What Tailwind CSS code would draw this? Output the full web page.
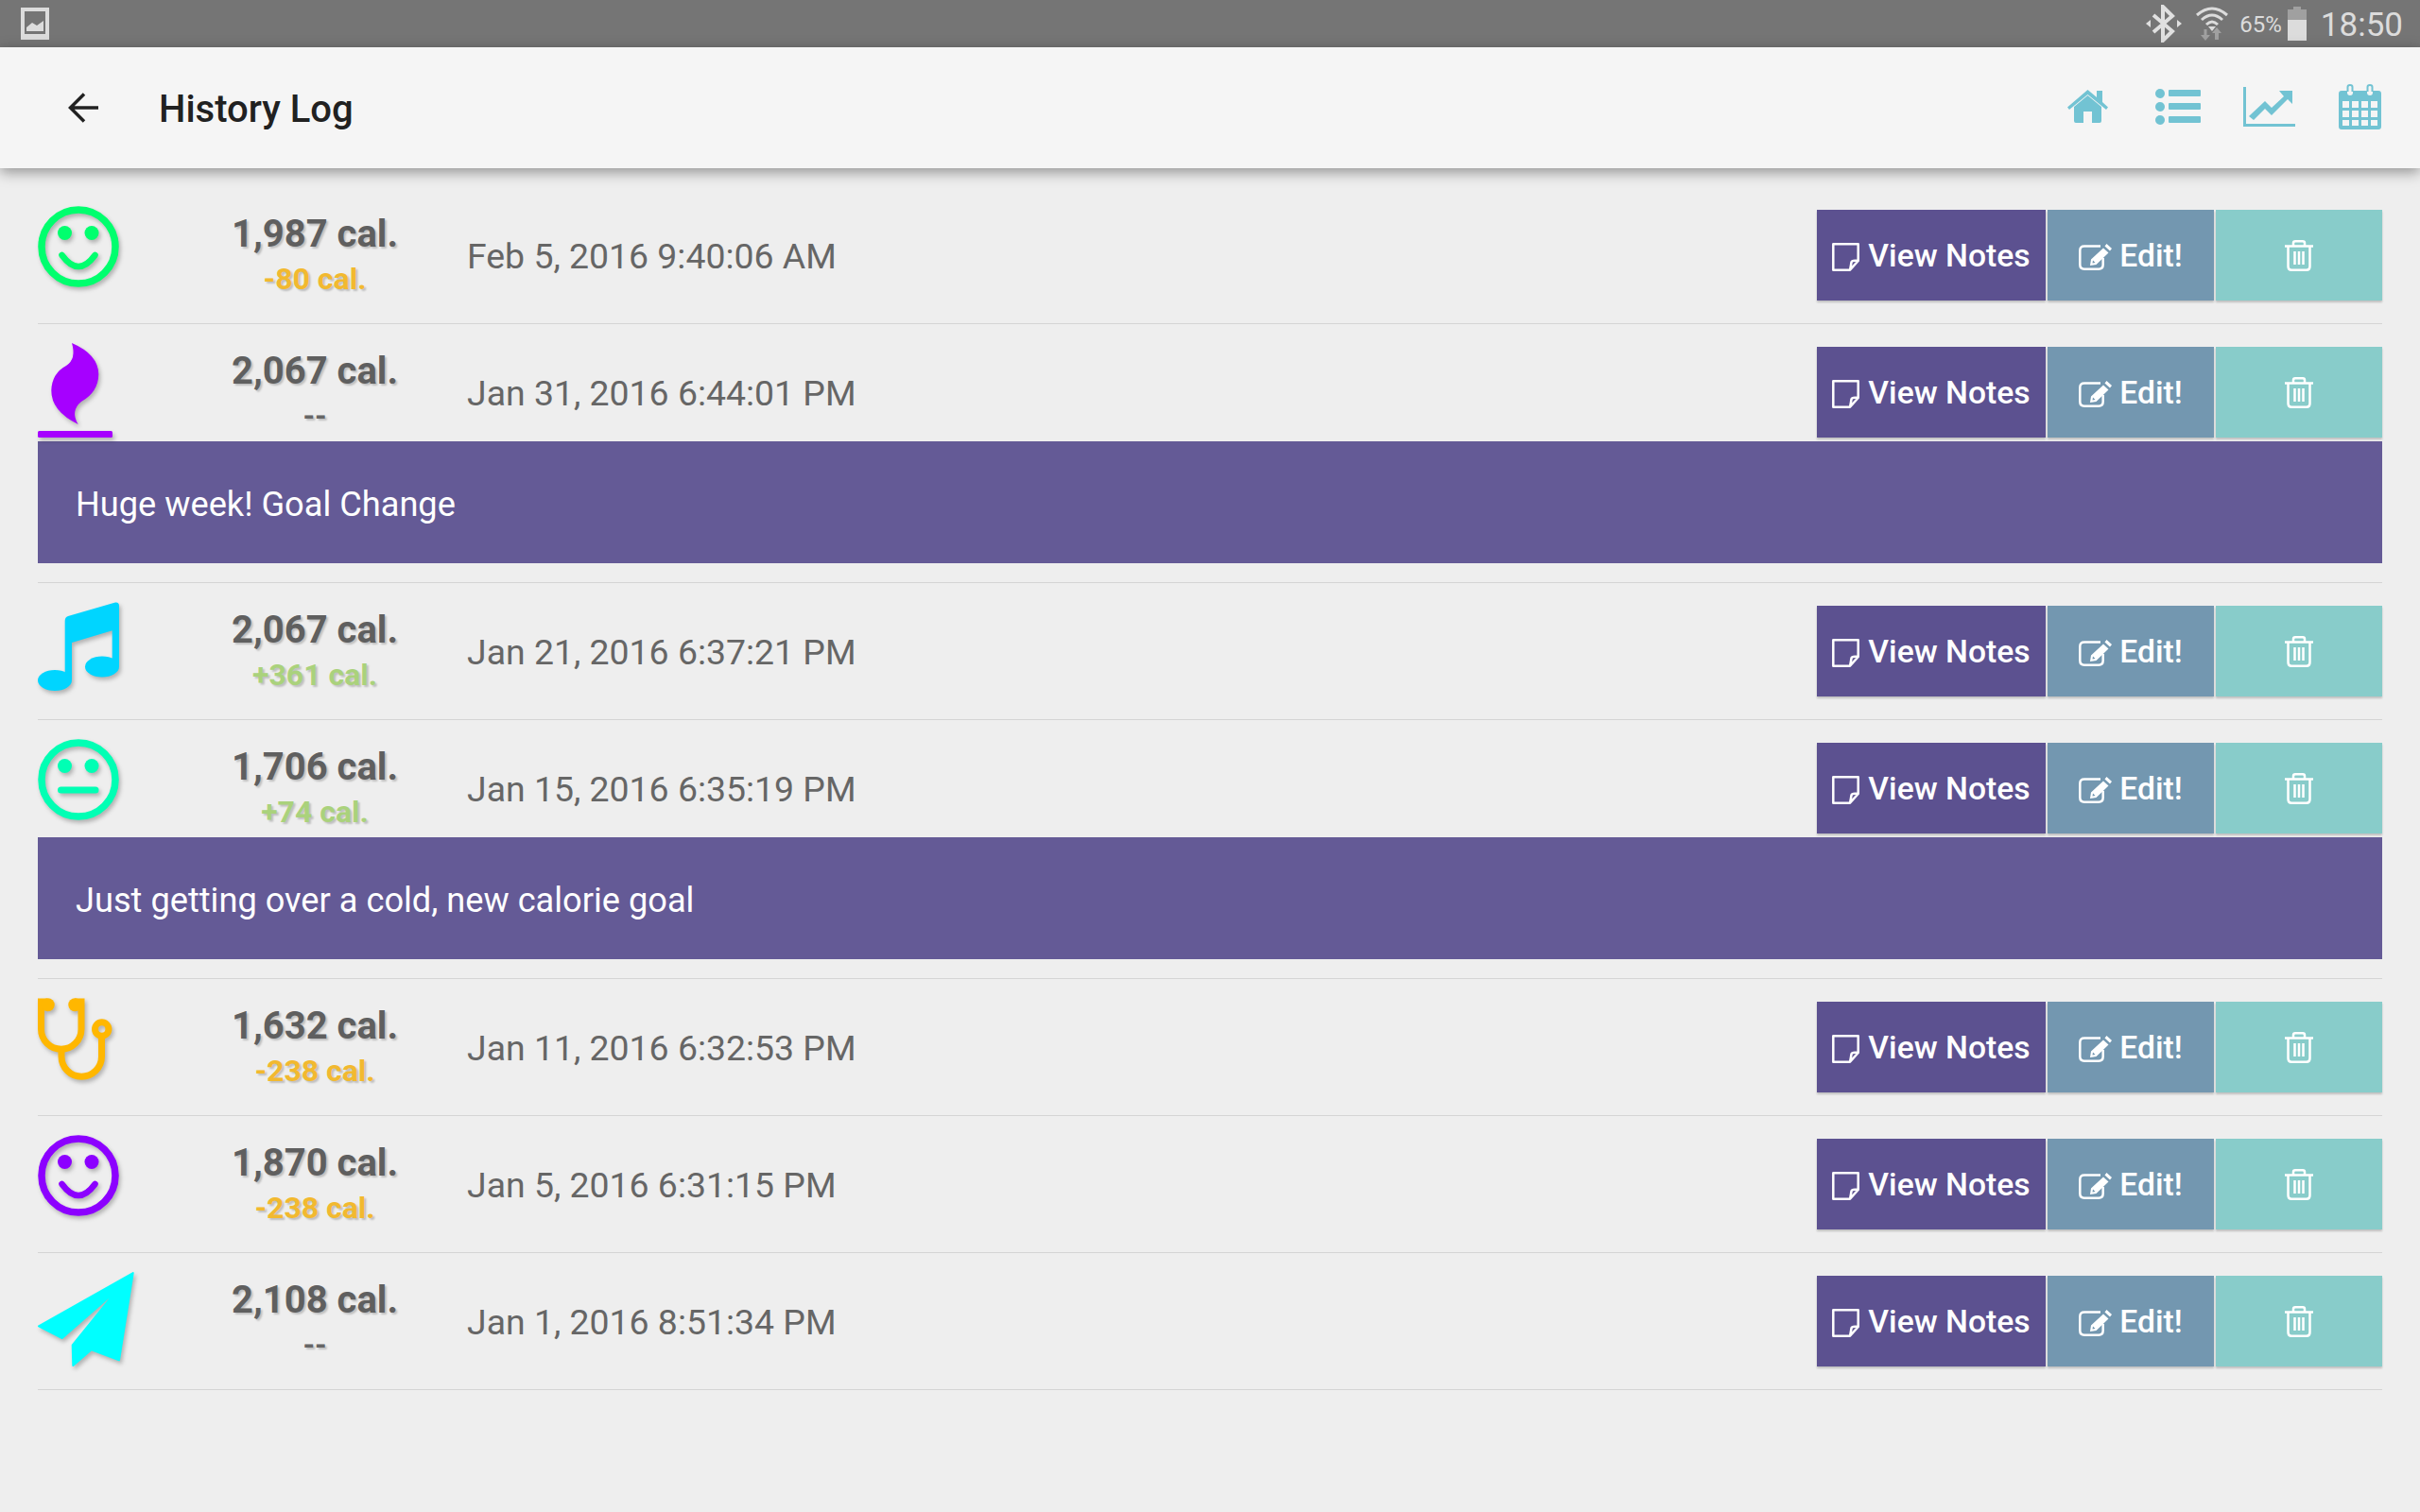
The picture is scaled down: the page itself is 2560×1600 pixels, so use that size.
<!doctype html>
<html>
<head>
<meta charset="utf-8">
<title>History Log</title>
<script src="https://cdn.jsdelivr.net/npm/@tailwindcss/browser@4"></script>
</head>
<body class="bg-[#eeeeee] font-['Roboto',sans-serif] w-[2560px] h-[1600px] overflow-hidden">

<!-- status bar -->
<div class="h-[50px] bg-[#757575] flex items-center pl-[22px] pr-[18px] text-[#dcdcdc]">
    <svg class="w-[30px] h-[34px]" viewBox="0 0 30 34"><path fill="#dcdcdc" fill-rule="evenodd" d="M0 0H30V34H0ZM4 4V28H26V4Z"/><path fill="#dcdcdc" d="M6 25V21L12 16L17 19L24 14V25Z"/></svg>
    <svg class="w-[38px] h-[40px] ml-auto" viewBox="0 0 38 40"><path fill="none" stroke="#e0e0e0" stroke-width="4" d="M8 11L28 28L18 38V2L28 12L8 29"/><path fill="#e0e0e0" d="M0 20L5 16V24ZM38 20L33 16V24Z"/></svg>
    <svg class="w-[36px] h-[38px] ml-[14px]" viewBox="0 0 36 38"><path fill="none" stroke="#dcdcdc" stroke-width="3" d="M2 10Q18 -4 34 10M7 15Q18 5 29 15M12 20Q18 14 24 20"/><path fill="#dcdcdc" d="M18 27L14 22H22Z"/><path fill="#a0a0a0" d="M11 37L6 31H9.500V25H12.500V31H16ZM23 23L28 29H25V36H21V29H18Z"/></svg>
    <span class="text-[24px] leading-none ml-[11px] mt-[2px]">65%</span>
    <div class="w-[20px] h-[36px] ml-[6px] flex flex-col items-center">
        <div class="w-[8px] h-[3px] bg-[#a0a0a0]"></div>
        <div class="w-full h-[11px] bg-[#a0a0a0]"></div>
        <div class="w-full h-[22px] bg-[#dcdcdc]"></div>
    </div>
    <span class="text-[35px] leading-none ml-[15px] mt-[2px]">18:50</span>
</div>

<!-- app bar -->
<div class="relative h-[128px] bg-[#f5f5f5] flex items-center shadow-[0_4px_14px_rgba(0,0,0,0.4)]">
    <svg class="w-[32px] h-[32px] ml-[72px]" viewBox="0 0 32 32"><path fill="none" stroke="#212121" stroke-width="3.500" d="M32 16H3M17 1.500L2.500 16L17 30.500"/></svg>
    <h1 class="ml-[64px] mt-[4px] text-[40px] font-medium text-[#212121]">History Log</h1>
    <div class="ml-auto flex items-center mr-[41px] -mt-[3px]">
        <svg class="w-[43px] h-[35px]" viewBox="0 0 43 35"><path fill="#72c3d3" d="M21.500 6L36 18V33Q36 35 34 35H26V23H17V35H9Q7 35 7 33V18Z"/><path fill="#72c3d3" d="M21.500 0L31 8V1H37V13L43 18.500L41 21L21.500 5L2 21L0 18.500Z"/></svg>
        <svg class="w-[48px] h-[38px] ml-[50px]" viewBox="0 0 48 38"><g fill="#72c3d3"><circle cx="5" cy="5" r="5"/><circle cx="5" cy="19" r="5"/><circle cx="5" cy="33" r="5"/><rect x="14" y="1" width="34" height="7" rx="1"/><rect x="14" y="15" width="34" height="7" rx="1"/><rect x="14" y="29" width="34" height="7" rx="1"/></g></svg>
        <svg class="w-[55px] h-[42px] ml-[45px]" viewBox="0 0 55 42"><path fill="#72c3d3" d="M0 0H3V39H55V42H0Z"/><path fill="#72c3d3" d="M6 31L23 15L30 22L43 10L38 4H52V18L47 13L30 30L23 23L11 35Z"/></svg>
        <svg class="w-[45px] h-[48px] ml-[46px]" viewBox="0 0 45 48"><path fill="#72c3d3" fill-rule="evenodd" d="M3 7H9V9Q9 12 12 12Q15 12 15 9V7H30V9Q30 12 33 12Q36 12 36 9V7H42Q45 7 45 10V45Q45 48 42 48H3Q0 48 0 45V10Q0 7 3 7ZM4 18V25H11V18ZM14 18V25H21V18ZM24 18V25H31V18ZM34 18V25H41V18ZM4 28V35H11V28ZM14 28V35H21V28ZM24 28V35H31V28ZM34 28V35H41V28ZM4 38V44H11V38ZM14 38V44H21V38ZM24 38V44H31V38ZM34 38V44H41V38Z"/><path fill="none" stroke="#72c3d3" stroke-width="2" d="M9.500 8V3Q9.500 1 12 1Q14.500 1 14.500 3V8M30.500 8V3Q30.500 1 33 1Q35.500 1 35.500 3V8"/></svg>
    </div>
</div>

<!-- history list -->
<div class="pt-[20px] mx-[40px]">

    <!-- Feb 5 -->
    <div class="border-b border-[#d4d4d4] pb-[20px]">
        <div class="flex h-[124px] items-start">
            <div class="w-[180px] pt-[20px]">
                <svg class="w-[86px] h-[86px] drop-shadow-[2px_3px_2px_rgba(0,0,0,0.25)]" viewBox="0 0 86 86"><circle cx="43" cy="43" r="39" fill="none" stroke="#00ff6e" stroke-width="7.500"/><circle cx="28.500" cy="28.500" r="7.500" fill="#00ff6e"/><circle cx="57" cy="28.500" r="7.500" fill="#00ff6e"/><path d="M25.500 52Q43 76 60.500 52" fill="none" stroke="#00ff6e" stroke-width="6.500" stroke-linecap="round"/></svg>
            </div>
            <div class="w-[226px] pt-[27px] text-center font-bold [text-shadow:2px_2px_2px_rgba(0,0,0,0.2)]">
                <p class="text-[40px] leading-[46px] text-[#5f5f5f]">1,987 cal.</p>
                <p class="text-[32px] leading-[36px] mt-[6px] text-[#f2b92f]">-80 cal.</p>
            </div>
            <div class="ml-[48px] mt-[24px] pt-[3px] h-[96px] flex items-center text-[37.4px] text-[#666666]">Feb 5, 2016 9:40:06 AM</div>
            <div class="ml-auto mt-[24px] flex gap-[2px] h-[96px] text-white text-[33.7px] font-medium">
                <button class="w-[242px] pt-[3px] bg-[#5c5190] flex items-center justify-center gap-[9px] shadow-[0_2px_2px_rgba(0,0,0,0.2)]">
                    <svg class="w-[29px] h-[30px]" viewBox="0 0 29 30"><path fill="none" stroke="#fff" stroke-width="2.500" stroke-linejoin="round" d="M1.300 1.300H27.700V19L19 28.700H1.300ZM27.700 19Q21 18 20.500 20.500Q20 24 19 28.700"/></svg>
                    View Notes
                </button>
                <button class="w-[176px] pt-[3px] bg-[#7397b0] flex items-center justify-center gap-[8px] shadow-[0_2px_2px_rgba(0,0,0,0.2)]">
                    <svg class="w-[35px] h-[28px]" viewBox="0 0 35 28"><path fill="none" stroke="#fff" stroke-width="2.500" d="M23 2.500H6Q1.300 2.500 1.300 7V22Q1.300 26.700 6 26.700H21Q25.700 26.700 25.700 22V15"/><path fill="#fff" fill-rule="evenodd" d="M29.500 0L35 5L33 7.500L27.500 2.500ZM26 4.500L31.500 9.500L18.500 22L12 23L13 16.500ZM15 17.500L14.500 20.500L17.500 20Z"/></svg>
                    Edit!
                </button>
                <button class="w-[176px] bg-[#88ccca] flex items-center justify-center shadow-[0_2px_2px_rgba(0,0,0,0.2)]">
                    <svg class="w-[30px] h-[33px]" viewBox="0 0 30 33"><path fill="none" stroke="#fff" stroke-width="2.500" stroke-linejoin="round" d="M0 6.500H30M9 6V3Q9 1.300 11 1.300H19Q21 1.300 21 3V6M3.500 7V28Q3.500 31.700 7 31.700H23Q26.500 31.700 26.500 28V7M10.500 12V26M15 12V26M19.500 12V26"/></svg>
                </button>
            </div>
        </div>
    </div>

    <!-- Jan 31 -->
    <div class="border-b border-[#d4d4d4] pb-[20px]">
        <div class="flex h-[124px] items-start">
            <div class="w-[180px] pt-[20px]">
                <svg class="w-[79px] h-[100px] drop-shadow-[2px_3px_2px_rgba(0,0,0,0.25)]" viewBox="0 0 79 100"><path fill="#a600ff" d="M36 0Q64 12 64.300 33Q64 52 46 62Q34 72 42.700 86Q14 72 14.300 50Q15 32 30 24Q41 17 36 0Z"/><rect y="93" width="79" height="7" rx="1.500" fill="#a600ff"/></svg>
            </div>
            <div class="w-[226px] pt-[27px] text-center font-bold [text-shadow:2px_2px_2px_rgba(0,0,0,0.2)]">
                <p class="text-[40px] leading-[46px] text-[#5f5f5f]">2,067 cal.</p>
                <p class="text-[32px] leading-[36px] mt-[6px] text-[#666666]">--</p>
            </div>
            <div class="ml-[48px] mt-[24px] pt-[3px] h-[96px] flex items-center text-[37.4px] text-[#666666]">Jan 31, 2016 6:44:01 PM</div>
            <div class="ml-auto mt-[24px] flex gap-[2px] h-[96px] text-white text-[33.7px] font-medium">
                <button class="w-[242px] pt-[3px] bg-[#5c5190] flex items-center justify-center gap-[9px] shadow-[0_2px_2px_rgba(0,0,0,0.2)]">
                    <svg class="w-[29px] h-[30px]" viewBox="0 0 29 30"><path fill="none" stroke="#fff" stroke-width="2.500" stroke-linejoin="round" d="M1.300 1.300H27.700V19L19 28.700H1.300ZM27.700 19Q21 18 20.500 20.500Q20 24 19 28.700"/></svg>
                    View Notes
                </button>
                <button class="w-[176px] pt-[3px] bg-[#7397b0] flex items-center justify-center gap-[8px] shadow-[0_2px_2px_rgba(0,0,0,0.2)]">
                    <svg class="w-[35px] h-[28px]" viewBox="0 0 35 28"><path fill="none" stroke="#fff" stroke-width="2.500" d="M23 2.500H6Q1.300 2.500 1.300 7V22Q1.300 26.700 6 26.700H21Q25.700 26.700 25.700 22V15"/><path fill="#fff" fill-rule="evenodd" d="M29.500 0L35 5L33 7.500L27.500 2.500ZM26 4.500L31.500 9.500L18.500 22L12 23L13 16.500ZM15 17.500L14.500 20.500L17.500 20Z"/></svg>
                    Edit!
                </button>
                <button class="w-[176px] bg-[#88ccca] flex items-center justify-center shadow-[0_2px_2px_rgba(0,0,0,0.2)]">
                    <svg class="w-[30px] h-[33px]" viewBox="0 0 30 33"><path fill="none" stroke="#fff" stroke-width="2.500" stroke-linejoin="round" d="M0 6.500H30M9 6V3Q9 1.300 11 1.300H19Q21 1.300 21 3V6M3.500 7V28Q3.500 31.700 7 31.700H23Q26.500 31.700 26.500 28V7M10.500 12V26M15 12V26M19.500 12V26"/></svg>
                </button>
            </div>
        </div>
        <div class="h-[129px] pt-[5px] bg-[#645a96] flex items-center pl-[40px] text-[36.2px] text-white">Huge week! Goal Change</div>
    </div>

    <!-- Jan 21 -->
    <div class="border-b border-[#d4d4d4] pb-[20px]">
        <div class="flex h-[124px] items-start">
            <div class="w-[180px] pt-[20px]">
                <svg class="w-[88px] h-[94px] drop-shadow-[2px_3px_2px_rgba(0,0,0,0.25)]" viewBox="0 0 88 94"><path fill="#00d5ff" d="M28.700 20Q28.700 16 32 15L82 0.500Q86 0 86 4V68H78.700V30.300L36 43V82H28.700Z"/><ellipse cx="18" cy="83" rx="18" ry="11" fill="#00d5ff"/><ellipse cx="68" cy="68.500" rx="18" ry="11" fill="#00d5ff"/></svg>
            </div>
            <div class="w-[226px] pt-[27px] text-center font-bold [text-shadow:2px_2px_2px_rgba(0,0,0,0.2)]">
                <p class="text-[40px] leading-[46px] text-[#5f5f5f]">2,067 cal.</p>
                <p class="text-[32px] leading-[36px] mt-[6px] text-[#aad27c]">+361 cal.</p>
            </div>
            <div class="ml-[48px] mt-[24px] pt-[3px] h-[96px] flex items-center text-[37.4px] text-[#666666]">Jan 21, 2016 6:37:21 PM</div>
            <div class="ml-auto mt-[24px] flex gap-[2px] h-[96px] text-white text-[33.7px] font-medium">
                <button class="w-[242px] pt-[3px] bg-[#5c5190] flex items-center justify-center gap-[9px] shadow-[0_2px_2px_rgba(0,0,0,0.2)]">
                    <svg class="w-[29px] h-[30px]" viewBox="0 0 29 30"><path fill="none" stroke="#fff" stroke-width="2.500" stroke-linejoin="round" d="M1.300 1.300H27.700V19L19 28.700H1.300ZM27.700 19Q21 18 20.500 20.500Q20 24 19 28.700"/></svg>
                    View Notes
                </button>
                <button class="w-[176px] pt-[3px] bg-[#7397b0] flex items-center justify-center gap-[8px] shadow-[0_2px_2px_rgba(0,0,0,0.2)]">
                    <svg class="w-[35px] h-[28px]" viewBox="0 0 35 28"><path fill="none" stroke="#fff" stroke-width="2.500" d="M23 2.500H6Q1.300 2.500 1.300 7V22Q1.300 26.700 6 26.700H21Q25.700 26.700 25.700 22V15"/><path fill="#fff" fill-rule="evenodd" d="M29.500 0L35 5L33 7.500L27.500 2.500ZM26 4.500L31.500 9.500L18.500 22L12 23L13 16.500ZM15 17.500L14.500 20.500L17.500 20Z"/></svg>
                    Edit!
                </button>
                <button class="w-[176px] bg-[#88ccca] flex items-center justify-center shadow-[0_2px_2px_rgba(0,0,0,0.2)]">
                    <svg class="w-[30px] h-[33px]" viewBox="0 0 30 33"><path fill="none" stroke="#fff" stroke-width="2.500" stroke-linejoin="round" d="M0 6.500H30M9 6V3Q9 1.300 11 1.300H19Q21 1.300 21 3V6M3.500 7V28Q3.500 31.700 7 31.700H23Q26.500 31.700 26.500 28V7M10.500 12V26M15 12V26M19.500 12V26"/></svg>
                </button>
            </div>
        </div>
    </div>

    <!-- Jan 15 -->
    <div class="border-b border-[#d4d4d4] pb-[20px]">
        <div class="flex h-[124px] items-start">
            <div class="w-[180px] pt-[20px]">
                <svg class="w-[86px] h-[86px] drop-shadow-[2px_3px_2px_rgba(0,0,0,0.25)]" viewBox="0 0 86 86"><circle cx="43" cy="43" r="39" fill="none" stroke="#00ffb4" stroke-width="7.500"/><circle cx="28.500" cy="28.500" r="7.500" fill="#00ffb4"/><circle cx="57" cy="28.500" r="7.500" fill="#00ffb4"/><path d="M24.500 54H61" fill="none" stroke="#00ffb4" stroke-width="7" stroke-linecap="round"/></svg>
            </div>
            <div class="w-[226px] pt-[27px] text-center font-bold [text-shadow:2px_2px_2px_rgba(0,0,0,0.2)]">
                <p class="text-[40px] leading-[46px] text-[#5f5f5f]">1,706 cal.</p>
                <p class="text-[32px] leading-[36px] mt-[6px] text-[#aad27c]">+74 cal.</p>
            </div>
            <div class="ml-[48px] mt-[24px] pt-[3px] h-[96px] flex items-center text-[37.4px] text-[#666666]">Jan 15, 2016 6:35:19 PM</div>
            <div class="ml-auto mt-[24px] flex gap-[2px] h-[96px] text-white text-[33.7px] font-medium">
                <button class="w-[242px] pt-[3px] bg-[#5c5190] flex items-center justify-center gap-[9px] shadow-[0_2px_2px_rgba(0,0,0,0.2)]">
                    <svg class="w-[29px] h-[30px]" viewBox="0 0 29 30"><path fill="none" stroke="#fff" stroke-width="2.500" stroke-linejoin="round" d="M1.300 1.300H27.700V19L19 28.700H1.300ZM27.700 19Q21 18 20.500 20.500Q20 24 19 28.700"/></svg>
                    View Notes
                </button>
                <button class="w-[176px] pt-[3px] bg-[#7397b0] flex items-center justify-center gap-[8px] shadow-[0_2px_2px_rgba(0,0,0,0.2)]">
                    <svg class="w-[35px] h-[28px]" viewBox="0 0 35 28"><path fill="none" stroke="#fff" stroke-width="2.500" d="M23 2.500H6Q1.300 2.500 1.300 7V22Q1.300 26.700 6 26.700H21Q25.700 26.700 25.700 22V15"/><path fill="#fff" fill-rule="evenodd" d="M29.500 0L35 5L33 7.500L27.500 2.500ZM26 4.500L31.500 9.500L18.500 22L12 23L13 16.500ZM15 17.500L14.500 20.500L17.500 20Z"/></svg>
                    Edit!
                </button>
                <button class="w-[176px] bg-[#88ccca] flex items-center justify-center shadow-[0_2px_2px_rgba(0,0,0,0.2)]">
                    <svg class="w-[30px] h-[33px]" viewBox="0 0 30 33"><path fill="none" stroke="#fff" stroke-width="2.500" stroke-linejoin="round" d="M0 6.500H30M9 6V3Q9 1.300 11 1.300H19Q21 1.300 21 3V6M3.500 7V28Q3.500 31.700 7 31.700H23Q26.500 31.700 26.500 28V7M10.500 12V26M15 12V26M19.500 12V26"/></svg>
                </button>
            </div>
        </div>
        <div class="h-[129px] pt-[5px] bg-[#645a96] flex items-center pl-[40px] text-[36.2px] text-white">Just getting over a cold, new calorie goal</div>
    </div>

    <!-- Jan 11 -->
    <div class="border-b border-[#d4d4d4] pb-[20px]">
        <div class="flex h-[124px] items-start">
            <div class="w-[180px] pt-[20px]">
                <svg class="w-[79px] h-[88px] drop-shadow-[2px_3px_2px_rgba(0,0,0,0.25)]" viewBox="0 0 79 88"><g fill="none" stroke="#ffb700" stroke-width="7"><path d="M10 4H3.500V33A21 21 0 0 0 46 33V4H39"/><path d="M25 54V62A21 21 0 0 0 67.500 62V40"/><circle cx="67.700" cy="33" r="7.200"/></g><circle cx="10.700" cy="7.300" r="7" fill="#ffb700"/><circle cx="39.300" cy="7.300" r="7" fill="#ffb700"/></svg>
            </div>
            <div class="w-[226px] pt-[27px] text-center font-bold [text-shadow:2px_2px_2px_rgba(0,0,0,0.2)]">
                <p class="text-[40px] leading-[46px] text-[#5f5f5f]">1,632 cal.</p>
                <p class="text-[32px] leading-[36px] mt-[6px] text-[#f2b92f]">-238 cal.</p>
            </div>
            <div class="ml-[48px] mt-[24px] pt-[3px] h-[96px] flex items-center text-[37.4px] text-[#666666]">Jan 11, 2016 6:32:53 PM</div>
            <div class="ml-auto mt-[24px] flex gap-[2px] h-[96px] text-white text-[33.7px] font-medium">
                <button class="w-[242px] pt-[3px] bg-[#5c5190] flex items-center justify-center gap-[9px] shadow-[0_2px_2px_rgba(0,0,0,0.2)]">
                    <svg class="w-[29px] h-[30px]" viewBox="0 0 29 30"><path fill="none" stroke="#fff" stroke-width="2.500" stroke-linejoin="round" d="M1.300 1.300H27.700V19L19 28.700H1.300ZM27.700 19Q21 18 20.500 20.500Q20 24 19 28.700"/></svg>
                    View Notes
                </button>
                <button class="w-[176px] pt-[3px] bg-[#7397b0] flex items-center justify-center gap-[8px] shadow-[0_2px_2px_rgba(0,0,0,0.2)]">
                    <svg class="w-[35px] h-[28px]" viewBox="0 0 35 28"><path fill="none" stroke="#fff" stroke-width="2.500" d="M23 2.500H6Q1.300 2.500 1.300 7V22Q1.300 26.700 6 26.700H21Q25.700 26.700 25.700 22V15"/><path fill="#fff" fill-rule="evenodd" d="M29.500 0L35 5L33 7.500L27.500 2.500ZM26 4.500L31.500 9.500L18.500 22L12 23L13 16.500ZM15 17.500L14.500 20.500L17.500 20Z"/></svg>
                    Edit!
                </button>
                <button class="w-[176px] bg-[#88ccca] flex items-center justify-center shadow-[0_2px_2px_rgba(0,0,0,0.2)]">
                    <svg class="w-[30px] h-[33px]" viewBox="0 0 30 33"><path fill="none" stroke="#fff" stroke-width="2.500" stroke-linejoin="round" d="M0 6.500H30M9 6V3Q9 1.300 11 1.300H19Q21 1.300 21 3V6M3.500 7V28Q3.500 31.700 7 31.700H23Q26.500 31.700 26.500 28V7M10.500 12V26M15 12V26M19.500 12V26"/></svg>
                </button>
            </div>
        </div>
    </div>

    <!-- Jan 5 -->
    <div class="border-b border-[#d4d4d4] pb-[20px]">
        <div class="flex h-[124px] items-start">
            <div class="w-[180px] pt-[20px]">
                <svg class="w-[86px] h-[86px] drop-shadow-[2px_3px_2px_rgba(0,0,0,0.25)]" viewBox="0 0 86 86"><circle cx="43" cy="43" r="39" fill="none" stroke="#8c00ff" stroke-width="7.500"/><circle cx="28.500" cy="28.500" r="7.500" fill="#8c00ff"/><circle cx="57" cy="28.500" r="7.500" fill="#8c00ff"/><path d="M25.500 52Q43 76 60.500 52" fill="none" stroke="#8c00ff" stroke-width="6.500" stroke-linecap="round"/></svg>
            </div>
            <div class="w-[226px] pt-[27px] text-center font-bold [text-shadow:2px_2px_2px_rgba(0,0,0,0.2)]">
                <p class="text-[40px] leading-[46px] text-[#5f5f5f]">1,870 cal.</p>
                <p class="text-[32px] leading-[36px] mt-[6px] text-[#f2b92f]">-238 cal.</p>
            </div>
            <div class="ml-[48px] mt-[24px] pt-[3px] h-[96px] flex items-center text-[37.4px] text-[#666666]">Jan 5, 2016 6:31:15 PM</div>
            <div class="ml-auto mt-[24px] flex gap-[2px] h-[96px] text-white text-[33.7px] font-medium">
                <button class="w-[242px] pt-[3px] bg-[#5c5190] flex items-center justify-center gap-[9px] shadow-[0_2px_2px_rgba(0,0,0,0.2)]">
                    <svg class="w-[29px] h-[30px]" viewBox="0 0 29 30"><path fill="none" stroke="#fff" stroke-width="2.500" stroke-linejoin="round" d="M1.300 1.300H27.700V19L19 28.700H1.300ZM27.700 19Q21 18 20.500 20.500Q20 24 19 28.700"/></svg>
                    View Notes
                </button>
                <button class="w-[176px] pt-[3px] bg-[#7397b0] flex items-center justify-center gap-[8px] shadow-[0_2px_2px_rgba(0,0,0,0.2)]">
                    <svg class="w-[35px] h-[28px]" viewBox="0 0 35 28"><path fill="none" stroke="#fff" stroke-width="2.500" d="M23 2.500H6Q1.300 2.500 1.300 7V22Q1.300 26.700 6 26.700H21Q25.700 26.700 25.700 22V15"/><path fill="#fff" fill-rule="evenodd" d="M29.500 0L35 5L33 7.500L27.500 2.500ZM26 4.500L31.500 9.500L18.500 22L12 23L13 16.500ZM15 17.500L14.500 20.500L17.500 20Z"/></svg>
                    Edit!
                </button>
                <button class="w-[176px] bg-[#88ccca] flex items-center justify-center shadow-[0_2px_2px_rgba(0,0,0,0.2)]">
                    <svg class="w-[30px] h-[33px]" viewBox="0 0 30 33"><path fill="none" stroke="#fff" stroke-width="2.500" stroke-linejoin="round" d="M0 6.500H30M9 6V3Q9 1.300 11 1.300H19Q21 1.300 21 3V6M3.500 7V28Q3.500 31.700 7 31.700H23Q26.500 31.700 26.500 28V7M10.500 12V26M15 12V26M19.500 12V26"/></svg>
                </button>
            </div>
        </div>
    </div>

    <!-- Jan 1 -->
    <div class="border-b border-[#d4d4d4] pb-[20px]">
        <div class="flex h-[124px] items-start">
            <div class="w-[180px] pt-[20px]">
                <svg class="w-[102px] h-[102px] drop-shadow-[2px_3px_2px_rgba(0,0,0,0.25)]" viewBox="0 0 102 102"><path fill="#00ffff" stroke="#00ffff" stroke-width="2" stroke-linejoin="round" d="M100.700 1L1 57.300L25.700 70L84 19L36.700 77.300L37.300 99L56.700 82.300L86 93.300Z"/></svg>
            </div>
            <div class="w-[226px] pt-[27px] text-center font-bold [text-shadow:2px_2px_2px_rgba(0,0,0,0.2)]">
                <p class="text-[40px] leading-[46px] text-[#5f5f5f]">2,108 cal.</p>
                <p class="text-[32px] leading-[36px] mt-[6px] text-[#666666]">--</p>
            </div>
            <div class="ml-[48px] mt-[24px] pt-[3px] h-[96px] flex items-center text-[37.4px] text-[#666666]">Jan 1, 2016 8:51:34 PM</div>
            <div class="ml-auto mt-[24px] flex gap-[2px] h-[96px] text-white text-[33.7px] font-medium">
                <button class="w-[242px] pt-[3px] bg-[#5c5190] flex items-center justify-center gap-[9px] shadow-[0_2px_2px_rgba(0,0,0,0.2)]">
                    <svg class="w-[29px] h-[30px]" viewBox="0 0 29 30"><path fill="none" stroke="#fff" stroke-width="2.500" stroke-linejoin="round" d="M1.300 1.300H27.700V19L19 28.700H1.300ZM27.700 19Q21 18 20.500 20.500Q20 24 19 28.700"/></svg>
                    View Notes
                </button>
                <button class="w-[176px] pt-[3px] bg-[#7397b0] flex items-center justify-center gap-[8px] shadow-[0_2px_2px_rgba(0,0,0,0.2)]">
                    <svg class="w-[35px] h-[28px]" viewBox="0 0 35 28"><path fill="none" stroke="#fff" stroke-width="2.500" d="M23 2.500H6Q1.300 2.500 1.300 7V22Q1.300 26.700 6 26.700H21Q25.700 26.700 25.700 22V15"/><path fill="#fff" fill-rule="evenodd" d="M29.500 0L35 5L33 7.500L27.500 2.500ZM26 4.500L31.500 9.500L18.500 22L12 23L13 16.500ZM15 17.500L14.500 20.500L17.500 20Z"/></svg>
                    Edit!
                </button>
                <button class="w-[176px] bg-[#88ccca] flex items-center justify-center shadow-[0_2px_2px_rgba(0,0,0,0.2)]">
                    <svg class="w-[30px] h-[33px]" viewBox="0 0 30 33"><path fill="none" stroke="#fff" stroke-width="2.500" stroke-linejoin="round" d="M0 6.500H30M9 6V3Q9 1.300 11 1.300H19Q21 1.300 21 3V6M3.500 7V28Q3.500 31.700 7 31.700H23Q26.500 31.700 26.500 28V7M10.500 12V26M15 12V26M19.500 12V26"/></svg>
                </button>
            </div>
        </div>
    </div>
</div>
</body>
</html>
